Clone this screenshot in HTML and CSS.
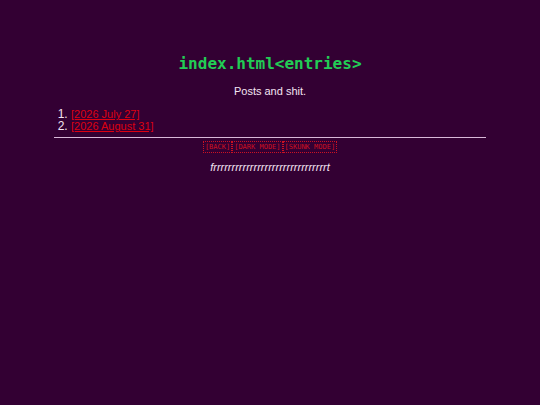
FILE: index.html
```html
<!DOCTYPE html>
<html>
<head>
<meta charset="utf-8">
<link rel="stylesheet" href="styles.css">
</head>
<body>
<div class="page">
  <h1 class="title">index.html&lt;entries&gt;</h1>
  <p class="subtitle">Posts and shit.</p>
  <ol class="entries">
    <li><a href="#">[2026 July 27]</a></li>
    <li><a href="#">[2026 August 31]</a></li>
  </ol>
  <hr class="rule">
  <div class="buttons">
    <a class="btn" href="#">[BACK]</a><a class="btn" href="#">[DARK MODE]</a><a class="btn" href="#">[SKUNK MODE]</a>
  </div>
  <p class="footer">frrrrrrrrrrrrrrrrrrrrrrrrrrrrrrrt</p>
</div>
</body>
</html>
```
FILE: styles.css
```css
html, body {
  margin: 0;
  padding: 0;
  background: #330033;
}
body {
  font-family: "Liberation Sans", Arial, sans-serif;
  font-size: 11px;
  color: #f4e4f2;
}
.page {
  width: 80%;
  margin: 0 auto;
  padding-top: 54px;
}
.title {
  margin: 0;
  text-align: center;
  font-family: "DejaVu Sans Mono", monospace;
  font-weight: bold;
  font-size: 16px;
  line-height: 20px;
  color: #22cc55;
}
.subtitle {
  margin: 9px 0 0;
  text-align: center;
  font-size: 11px;
  line-height: 16px;
}
.entries {
  margin: 9px 0 0;
  padding-left: 17px;
  font-size: 12px;
  line-height: 12px;
}
.entries li {
  font-size: 12px;
}
.entries a {
  font-size: 11px;
  color: #dd0011;
}
.rule {
  margin: 5px 0 0;
  border: 0;
  height: 1px;
  background: #d8b8d8;
}
.buttons {
  margin-top: 2px;
  text-align: center;
  line-height: 10px;
}
.btn {
  font-family: "DejaVu Sans Mono", monospace;
  font-size: 7px;
  color: #cc1122;
  text-decoration: none;
  outline: 1px dotted #cc1122;
  padding: 1px 1px;
  margin: 0 1px;
}
.footer {
  margin: 8px 0 0;
  text-align: center;
  font-style: italic;
  font-size: 11px;
  line-height: 14px;
}
```
